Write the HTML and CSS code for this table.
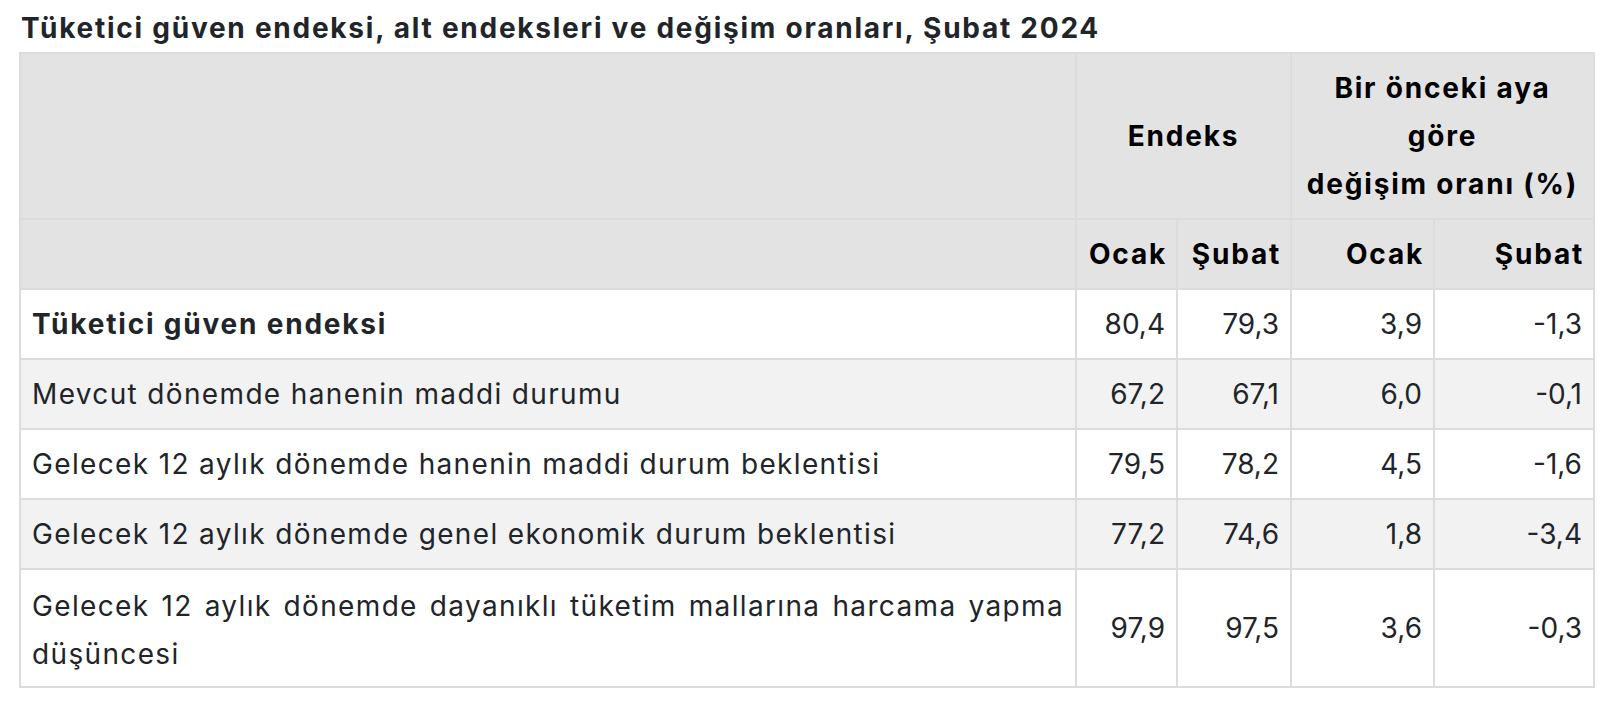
FILE: index.html
```html
<!DOCTYPE html>
<html lang="tr">
<head>
<meta charset="utf-8">
<title>Tüketici güven endeksi</title>
<link rel="stylesheet" href="styles.css">
</head>
<body>
<div class="page">
  <h2 class="title">Tüketici güven endeksi, alt endeksleri ve değişim oranları, Şubat 2024</h2>
  <table class="data">
    <colgroup>
      <col class="c-label">
      <col class="c-a">
      <col class="c-b">
      <col class="c-c">
      <col class="c-d">
    </colgroup>
    <thead>
      <tr>
        <th></th>
        <th colspan="2" class="center">Endeks</th>
        <th colspan="2" class="center">Bir önceki aya<br>göre<br>değişim oranı (%)</th>
      </tr>
      <tr class="sub">
        <th></th>
        <th class="num">Ocak</th>
        <th class="num">Şubat</th>
        <th class="num">Ocak</th>
        <th class="num">Şubat</th>
      </tr>
    </thead>
    <tbody>
      <tr>
        <td class="label strong">Tüketici güven endeksi</td>
        <td class="num">80,4</td><td class="num">79,3</td><td class="num">3,9</td><td class="num">-1,3</td>
      </tr>
      <tr class="alt">
        <td class="label">Mevcut dönemde hanenin maddi durumu</td>
        <td class="num">67,2</td><td class="num">67,1</td><td class="num">6,0</td><td class="num">-0,1</td>
      </tr>
      <tr>
        <td class="label">Gelecek 12 aylık dönemde hanenin maddi durum beklentisi</td>
        <td class="num">79,5</td><td class="num">78,2</td><td class="num">4,5</td><td class="num">-1,6</td>
      </tr>
      <tr class="alt">
        <td class="label">Gelecek 12 aylık dönemde genel ekonomik durum beklentisi</td>
        <td class="num">77,2</td><td class="num">74,6</td><td class="num">1,8</td><td class="num">-3,4</td>
      </tr>
      <tr>
        <td class="label justify">Gelecek 12 aylık dönemde dayanıklı tüketim mallarına harcama yapma düşüncesi</td>
        <td class="num">97,9</td><td class="num">97,5</td><td class="num">3,6</td><td class="num">-0,3</td>
      </tr>
    </tbody>
  </table>
</div>
</body>
</html>
```

FILE: styles.css
```css
html, body {
  margin: 0;
  padding: 0;
  background: #ffffff;
}

.page {
  padding: 11px 13px 0 19px;
}

.title {
  margin: 0 0 7px 2px;
  font-family: Inter, "Liberation Sans", sans-serif;
  font-weight: 700;
  font-size: 28px;
  line-height: 34px;
  letter-spacing: 1.75px;
  color: #212529;
}

.data {
  width: 1576px;
  table-layout: fixed;
  border-collapse: separate;
  border-spacing: 0;
  border: 1px solid #dcdcdc;
  font-family: Inter, "Liberation Sans", sans-serif;
  font-size: 28px;
  line-height: 48px;
  color: #212529;
}

.c-label { width: 1056px; }
.c-a { width: 101px; }
.c-b { width: 114px; }
.c-c { width: 143px; }
.c-d { width: 160px; }

.data th,
.data td {
  border: 1px solid #dcdcdc;
  padding: 10px 11px;
  vertical-align: middle;
  text-align: left;
}

.data th {
  background: #e3e3e3;
  color: #000000;
  font-weight: 700;
  letter-spacing: 1.8px;
}

.data th.center {
  text-align: center;
}

.data .num {
  text-align: right;
}

.data th.num {
  padding-right: 9px;
}

.data td.label {
  letter-spacing: 1.35px;
}

.data td.strong {
  font-weight: 700;
  letter-spacing: 1.8px;
}

.data td.justify {
  text-align: justify;
  padding-top: 12px;
  padding-bottom: 8px;
}

.data tbody tr.alt td {
  background: #f2f2f2;
}
```
